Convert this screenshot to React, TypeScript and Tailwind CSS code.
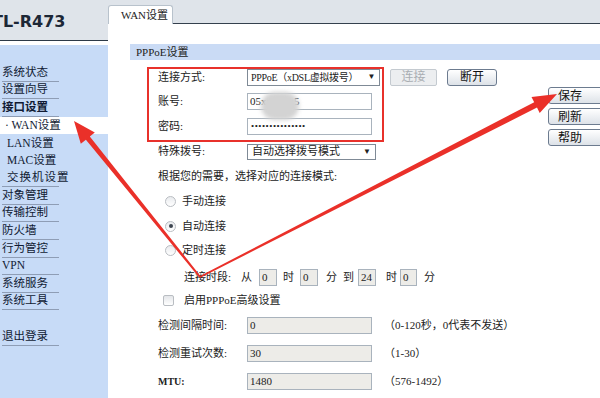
const FONT = '"Liberation Serif", "Noto Sans CJK SC", serif'

const MENU = [
  { label: '系统状态', line: true },
  { label: '设置向导', line: true },
  { label: '接口设置', line: true, bold: true },
  { label: '· WAN设置', sub: true, active: true },
  { label: 'LAN设置', sub: true },
  { label: 'MAC设置', sub: true },
  { label: '交换机设置', sub: true, line: true, wide: true },
  { label: '对象管理', line: true },
  { label: '传输控制', line: true },
  { label: '防火墙', line: true },
  { label: '行为管控', line: true },
  { label: 'VPN', line: true },
  { label: '系统服务', line: true },
  { label: '系统工具', line: true },
  { label: '', line: false },
  { label: '退出登录', line: true },
]

function Radio({ checked }: { checked?: boolean }) {
  return (
    <span className="flex h-[11px] w-[11px] items-center justify-center rounded-full border border-[#b9bdc2] bg-gradient-to-b from-[#e9ebee] to-white">
      {checked && <span className="h-[4px] w-[4px] rounded-full bg-[#3d4550]" />}
    </span>
  )
}

function Field({ value, w = 'w-[125px]', gray }: { value: string; w?: string; gray?: boolean }) {
  return (
    <div
      className={`flex h-[17px] shrink-0 items-center border border-[#a9b3bd] px-[2px] text-[11px] text-[#222] ${w} ${
        gray ? 'bg-[#edece8]' : 'bg-white'
      }`}
    >
      {value}
    </div>
  )
}

function SideButton({ label }: { label: string }) {
  return (
    <div className="flex h-[17px] w-[60px] shrink-0 items-center rounded-[3px] border border-[#6c7b8f] bg-gradient-to-b from-white to-[#dde2e8] pl-[9px] text-[12px] text-[#111]">
      {label}
    </div>
  )
}

export default function App() {
  return (
    <div
      className="relative flex h-[398px] w-[600px] overflow-hidden bg-white text-[#1b2233]"
      style={{ fontFamily: FONT }}
    >
      {/* left column */}
      <div className="flex w-[108px] shrink-0 flex-col">
        <div className="flex h-[41px] items-center overflow-hidden border-b border-[#2c3947] bg-[#dfe4ea] pt-[3px]">
          <span
            className="-ml-[8px] whitespace-nowrap text-[16px] font-bold text-[#1c2736]"
            style={{ fontFamily: '"DejaVu Sans", sans-serif' }}
          >
            TL-R473
          </span>
        </div>
        <div className="h-[4px]" />
        <div className="flex-1 border-l-[2px] border-[#c7dbf7] bg-[#c7dbf7] pt-[19px]">
          {MENU.map((m, i) => (
            <div
              key={i}
              className={`flex h-[17.6px] flex-col justify-center ${m.active ? '-ml-[2px] bg-white' : ''}`}
            >
              <div
                className={`flex h-[17.6px] w-[57px] items-center whitespace-nowrap text-[11.5px] text-[#101a33] ${
                  m.line ? 'border-b border-[#8e9db5]' : ''
                } ${m.sub ? 'pl-[5px]' : ''} ${m.bold ? 'font-bold' : ''} ${m.wide ? 'tracking-[1px]' : ''}`}
              >
                {m.label}
              </div>
            </div>
          ))}
        </div>
      </div>

      {/* right column */}
      <div className="flex min-w-0 flex-1 flex-col">
        <div className="flex h-[27px] items-end bg-[#dfe4ea]">
          <div className="flex h-[19px] w-[65px] shrink-0 items-center rounded-t-[3px] border border-b-0 border-[#b8c2cc] bg-white pl-[12px] text-[11px] text-[#222]">
            WAN设置
          </div>
          <div className="h-full flex-1 border-b-[1.5px] border-[#34404d]" />
        </div>

        <div className="pl-[22px] pt-[20px]">
          <div className="flex h-[16px] items-center bg-[#cadbf5] pl-[6px] text-[11px] text-[#222]">PPPoE设置</div>

          <div className="flex">
            <div className="flex w-[418px] shrink-0 flex-col pl-[28px] pt-[5px] text-[11px] text-[#222]">
              <div className="flex h-[24px] items-center">
                <span className="w-[89px] shrink-0">连接方式:</span>
                <div className="flex h-[17px] w-[133px] shrink-0 items-center justify-between whitespace-nowrap border border-[#7f8a96] bg-white pl-[3px] pr-[4px] text-[10px] tracking-[-0.3px]">
                  <span>PPPoE（xDSL虚拟拨号）</span>
                  <span className="text-[8px]">▼</span>
                </div>
                <div className="ml-[10px] flex h-[17px] w-[47px] shrink-0 items-center justify-center rounded-[2px] border border-[#c4cad0] bg-[#eceef0] text-[12px] text-[#a9adb2]">
                  连接
                </div>
                <div className="ml-[10px] flex h-[17px] w-[50px] shrink-0 items-center justify-center rounded-[3px] border border-[#6c7b8f] bg-gradient-to-b from-white to-[#dde2e8] text-[12px] text-[#111]">
                  断开
                </div>
              </div>
              <div className="flex h-[25px] items-center">
                <span className="w-[89px] shrink-0">账号:</span>
                <Field value="05xxxxxx5" />
              </div>
              <div className="flex h-[25px] items-center">
                <span className="w-[89px] shrink-0">密码:</span>
                <div className="flex h-[17px] w-[125px] shrink-0 items-center border border-[#a9b3bd] bg-white px-[3px] text-[9px] tracking-[0.5px]">
                  •••••••••••••••
                </div>
              </div>
              <div className="flex h-[25px] items-center">
                <span className="w-[89px] shrink-0">特殊拨号:</span>
                <div className="flex h-[16px] w-[129px] shrink-0 items-center justify-between whitespace-nowrap border border-[#7f8a96] bg-white pl-[4px] pr-[4px] text-[11px]">
                  <span>自动选择拨号模式</span>
                  <span className="text-[8px]">▼</span>
                </div>
              </div>
              <div className="flex h-[25px] items-center">根据您的需要，选择对应的连接模式:</div>
              <div className="flex h-[25px] items-center gap-[6px] pl-[7px]">
                <Radio />
                <span>手动连接</span>
              </div>
              <div className="flex h-[24px] items-center gap-[6px] pl-[7px]">
                <Radio checked />
                <span>自动连接</span>
              </div>
              <div className="flex h-[25px] items-center gap-[6px] pl-[7px]">
                <Radio />
                <span>定时连接</span>
              </div>
              <div className="flex h-[28px] items-center whitespace-nowrap pl-[26px]">
                <span className="w-[57px] shrink-0">连接时段:</span>
                <span className="w-[18px] shrink-0">从</span>
                <Field value="0" w="w-[18px]" gray />
                <span className="ml-[6px] w-[17px] shrink-0">时</span>
                <Field value="0" w="w-[18px]" gray />
                <span className="ml-[8px] w-[17px] shrink-0">分</span>
                <span className="w-[15px] shrink-0">到</span>
                <Field value="24" w="w-[18px]" gray />
                <span className="ml-[10px] w-[14px] shrink-0">时</span>
                <Field value="0" w="w-[17px]" gray />
                <span className="ml-[7px]">分</span>
              </div>
              <div className="flex h-[18px] items-center pl-[5px]">
                <span className="h-[11px] w-[11px] rounded-[2px] border border-[#b9bdc2] bg-gradient-to-b from-[#e4e6e9] to-white" />
                <span className="ml-[10px]">启用PPPoE高级设置</span>
              </div>
              <div className="flex h-[33px] items-center whitespace-nowrap">
                <span className="w-[89px] shrink-0">检测间隔时间:</span>
                <Field value="0" gray />
                <span className="ml-[12px]">（0-120秒，0代表不发送）</span>
              </div>
              <div className="flex h-[22px] items-center">
                <span className="w-[89px] shrink-0">检测重试次数:</span>
                <Field value="30" gray />
                <span className="ml-[12px]">（1-30）</span>
              </div>
              <div className="flex h-[34px] items-center">
                <span className="w-[89px] shrink-0 text-[10px] font-bold">MTU:</span>
                <Field value="1480" gray />
                <span className="ml-[12px]">（576-1492）</span>
              </div>
            </div>

            <div className="flex flex-col gap-[4px] pt-[27px]">
              <SideButton label="保存" />
              <SideButton label="刷新" />
              <SideButton label="帮助" />
            </div>
          </div>
        </div>
      </div>

      {/* annotations */}
      <div className="absolute left-[261px] top-[92px] h-[28px] w-[38px] rounded-full bg-[#d3d3d3] blur-[2px]" />
      <div className="absolute left-[147px] top-[67px] h-[75px] w-[237px] border-[2.5px] border-[#e8312b]" />
      <svg className="pointer-events-none absolute inset-0" width="600" height="398">
        <polygon
          fill="#ea3029"
          points="74,121 94.8,132.5 89.8,136.5 200.8,276.4 199.2,277.6 85.9,139.7 80.8,143.8"
        />
        <polygon
          fill="#ea3029"
          points="557,94 539.7,112.9 537,107.6 200.4,277.7 199.6,276.3 534.2,102.2 531.5,96.9"
        />
      </svg>
    </div>
  )
}
